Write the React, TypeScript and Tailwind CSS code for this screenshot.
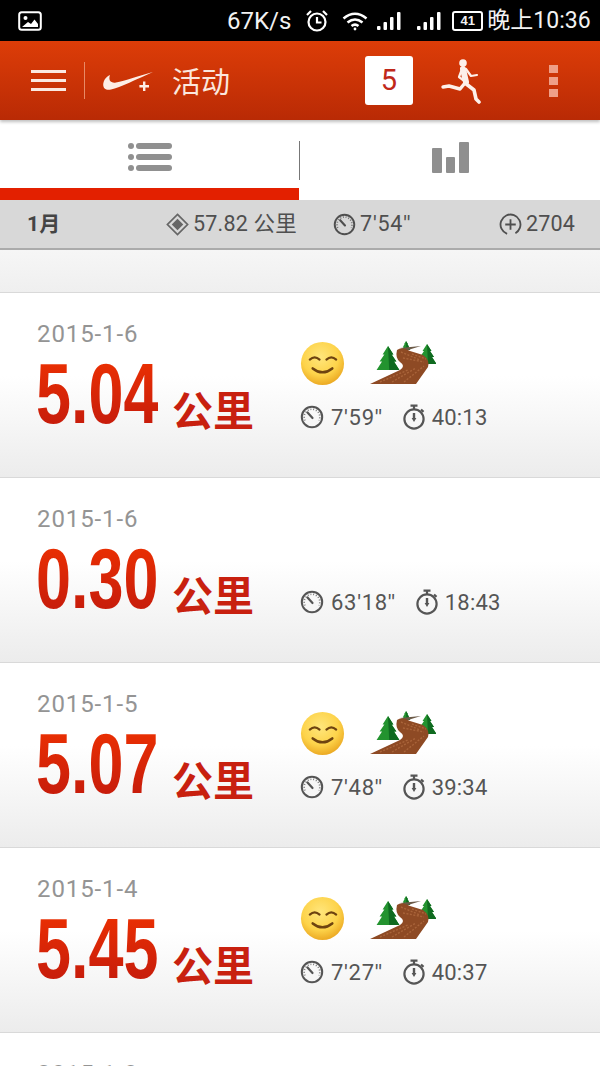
const ROWS = [
  { date: "2015-1-6", km: "5.04", pace: "7'59''", time: "40:13", badges: true },
  { date: "2015-1-6", km: "0.30", pace: "63'18''", time: "18:43", badges: false },
  { date: "2015-1-5", km: "5.07", pace: "7'48''", time: "39:34", badges: true },
  { date: "2015-1-4", km: "5.45", pace: "7'27''", time: "40:37", badges: true },
  { date: "2015-1-3", km: "5.12", pace: "7'50''", time: "40:08", badges: true },
];

function Gauge({ className }: { className?: string }) {
  return (
    <svg viewBox="0 0 24 24" className={className} fill="none" stroke="currentColor">
      <circle cx="12" cy="12" r="10.2" strokeWidth="2" />
      <path d="M5 15.5A7.8 7.8 0 1 1 19 15.5" strokeWidth="1.6" strokeDasharray="1 1.8" opacity="0.75" />
      <path d="M7.5 7.5 L12.5 13" strokeWidth="2.2" strokeLinecap="round" />
    </svg>
  );
}

function Stopwatch({ className }: { className?: string }) {
  return (
    <svg viewBox="0 0 24 26" className={className} fill="none" stroke="currentColor">
      <circle cx="12" cy="15" r="9.6" strokeWidth="2.2" />
      <path d="M8.5 1.6h7M12 2v3.5M19 5.5l2.5 2.4" strokeWidth="2.2" />
      <path d="M12 9v6" strokeWidth="2.4" />
      <path d="M9.6 14h4.8L12 18z" fill="currentColor" stroke="none" />
    </svg>
  );
}

function Smile() {
  return (
    <svg viewBox="0 0 46 46" className="h-[45px] w-[45px]">
      <defs>
        <radialGradient id="face" cx="45%" cy="35%" r="70%">
          <stop offset="0%" stopColor="#ffe67c" />
          <stop offset="60%" stopColor="#fdd34a" />
          <stop offset="100%" stopColor="#e8a11b" />
        </radialGradient>
      </defs>
      <circle cx="23" cy="23" r="22" fill="url(#face)" />
      <path d="M10 19q5-4.5 10 0M27 19q5-4.5 10 0" fill="none" stroke="#6e4310" strokeWidth="2.2" strokeLinecap="round" />
      <path d="M13 28q10 8 20 0" fill="none" stroke="#6e4310" strokeWidth="2.6" strokeLinecap="round" />
    </svg>
  );
}

function Tree({ x, y, s }: { x: number; y: number; s: number }) {
  return (
    <g transform={`translate(${x} ${y}) scale(${s})`}>
      <path d="M0 0 L4.5 7 L3 7 L7 13 L5 13 L9.5 20 L-9.5 20 L-5 13 L-7 13 L-3 7 L-4.5 7Z" fill="#23932f" />
      <path d="M0 0 L4.5 7 L3 7 L7 13 L5 13 L9.5 20 L1 20Z" fill="#0f6a20" />
    </g>
  );
}

function Trail() {
  return (
    <svg viewBox="0 0 66 44" className="h-[44px] w-[66px]">
      <Tree x={36} y={0} s={0.45} />
      <Tree x={18} y={5} s={1.2} />
      <Tree x={57} y={3} s={1.0} />
      <path d="M30 7 L51 5 L38 9z" fill="#6b5a48" />
      <path
        d="M0 43 L30 29 Q36 25 30 21 Q25 17 27 9 Q32 5 40 10 L53 14 Q60 19 58 26 L46 43Z"
        fill="#8e4a24"
      />
      <path
        d="M10 41 L38 29 M31 11 L50 19 M22 41 L46 27 M33 17 L54 21 M34 41 L54 25 M42 13 L56 18"
        stroke="#a9643a"
        strokeWidth="1.4"
        strokeDasharray="2 1.5"
      />
    </svg>
  );
}

function Row({ row }: { row: (typeof ROWS)[number] }) {
  return (
    <div className="flex h-[185px] shrink-0 border-b border-[#d9d9d9] bg-gradient-to-b from-white from-45% to-[#ececec]">
      <div className="w-[300px] shrink-0 pl-[37px] pt-[27px]">
        <div className="font-['Roboto'] text-[24px] leading-[28px] tracking-[0.9px] text-[#949494]">{row.date}</div>
        <div className="mt-[2px] flex h-[88px] items-center">
          <div className="-ml-[1px] w-[124px] shrink-0">
            <span className="inline-block origin-left scale-x-[0.74] whitespace-nowrap bg-gradient-to-b from-[#f03200] to-[#c0180c] bg-clip-text font-['Liberation_Sans'] text-[85px] font-bold leading-[88px] text-transparent">
              {row.km}
            </span>
          </div>
          <span className="ml-[12px] mt-[28px] whitespace-nowrap font-['Noto_Sans_CJK_SC'] text-[41px] font-bold leading-[48px] text-[#c8200f]">
            公里
          </span>
        </div>
      </div>
      <div className="flex flex-col pt-[47px] font-['Roboto'] text-[22px] text-[#555]">
        <div className="flex h-[46px] items-center">
          {row.badges && (
            <>
              <Smile />
              <div className="ml-[25px]">
                <Trail />
              </div>
            </>
          )}
        </div>
        <div className="mt-[18px] flex h-[26px] items-center">
          <Gauge className="h-[24px] w-[24px]" />
          <span className="ml-[7px] tracking-[0.7px]">{row.pace}</span>
          <Stopwatch className="ml-[19px] h-[26px] w-[24px]" />
          <span className="ml-[6px] tracking-[0.2px]">{row.time}</span>
        </div>
      </div>
    </div>
  );
}

function SignalBars() {
  return (
    <svg viewBox="0 0 24 18" className="h-[18px] w-[24px]" fill="white">
      <rect x="0" y="14" width="3.5" height="4" rx="1" />
      <rect x="6.5" y="10" width="3.5" height="8" rx="1" />
      <rect x="13" y="5" width="3.5" height="13" rx="1" />
      <rect x="20" y="0" width="3.5" height="18" rx="1" />
    </svg>
  );
}

export default function App() {
  return (
    <div className="flex h-[1066px] w-[600px] flex-col overflow-hidden bg-white">
      {/* status bar */}
      <div className="flex h-[41px] shrink-0 items-center bg-black pl-[18px] font-['Roboto'] text-[24px] text-[#f2f2f2]">
        <svg viewBox="0 0 24 20" className="h-[20px] w-[24px]" fill="none">
          <rect x="1.2" y="1.2" width="21.6" height="17.6" rx="2.5" stroke="white" strokeWidth="2" />
          <circle cx="7.5" cy="7" r="2" fill="white" />
          <path d="M4 16 L10 11 L13 13 L16.5 8.5 L20 13 V16Z" fill="white" />
        </svg>
        <span className="ml-[185px] pt-[1px]">67K/s</span>
        <svg viewBox="0 0 24 24" className="ml-[14px] h-[24px] w-[24px]" fill="none" stroke="white" strokeWidth="2.2">
          <circle cx="12" cy="13" r="8.5" />
          <path d="M12 8v5.5h4.5M2 6l4-4M22 6l-4-4" />
        </svg>
        <svg viewBox="0 0 26 20" className="ml-[13px] h-[20px] w-[26px]" fill="none" stroke="white" strokeWidth="2.6">
          <path d="M1.5 7.5q11.5-9.5 23 0M5.5 11.5q7.5-6 15 0M9.5 15q3.5-2.6 7 0" />
          <circle cx="13" cy="18" r="1.4" fill="white" stroke="none" />
        </svg>
        <div className="ml-[9px]">
          <SignalBars />
        </div>
        <div className="ml-[16px]">
          <SignalBars />
        </div>
        <div className="ml-[11px] flex h-[20px] w-[31px] items-center justify-center rounded-[3px] border-2 border-white font-['Liberation_Sans'] text-[13px] font-bold leading-none">
          41
        </div>
        <span className="ml-[4px] whitespace-nowrap font-['Roboto','Noto_Sans_CJK_SC'] text-[23px] leading-none">
          晚上10:36
        </span>
      </div>

      {/* header */}
      <div className="flex h-[79px] shrink-0 items-center bg-gradient-to-b from-[#dd3d08] to-[#b92a05] pl-[31px] shadow-[0_2px_3px_rgba(0,0,0,0.25)]">
        <div className="flex w-[35px] flex-col gap-[6px]">
          <div className="h-[3px] bg-[#fbe9e1]" />
          <div className="h-[3px] bg-[#fbe9e1]" />
          <div className="h-[3px] bg-[#fbe9e1]" />
        </div>
        <div className="ml-[18px] h-[37px] w-px bg-[#e88a66]" />
        <svg viewBox="0 0 50 22" className="ml-[18px] h-[22px] w-[50px]" fill="#fdeee6">
          <path d="M2 9 C-2 16 1 21 8 19.5 C17 17.5 34 9 50 2 C36 5.5 22 11 13 12.5 C8 13.4 5 11 7 5 C5 6 3 7.5 2 9Z" />
          <path d="M40 11.5h2.4v3.6h3.6v2.4h-3.6v3.6H40v-3.6h-3.6v-2.4H40z" />
        </svg>
        <span className="ml-[19px] font-['Noto_Sans_CJK_SC'] text-[29px] leading-none text-[#fbe7dd]">活动</span>
        <div className="ml-[135px] flex h-[49px] w-[48px] items-center justify-center rounded-[3px] bg-white font-['Roboto'] text-[29px] text-[#c0281a]">
          5
        </div>
        <svg viewBox="0 0 40 46" className="ml-[28px] h-[46px] w-[40px]" fill="none" stroke="#fdf0ea" strokeLinejoin="round" strokeLinecap="round">
          <circle cx="22" cy="5" r="3.8" fill="#fdf0ea" stroke="none" />
          <path d="M22 11 L25 24" strokeWidth="6" />
          <path d="M24 25 L33 32 L35 41 L38 44" strokeWidth="3.6" />
          <path d="M24 25 L19 31 L8 28 L2 29" strokeWidth="3.4" />
          <path d="M21 11 L18 19 L22 22" strokeWidth="2.2" />
          <path d="M25 11 L30 18 L36 17" strokeWidth="2.2" />
        </svg>
        <div className="ml-[68px] flex flex-col gap-[4px]">
          <div className="h-[8px] w-[9px] bg-[#ef9f88]" />
          <div className="h-[8px] w-[9px] bg-[#ef9f88]" />
          <div className="h-[8px] w-[9px] bg-[#ef9f88]" />
        </div>
      </div>

      {/* tabs */}
      <div className="mt-[2px] flex h-[78px] shrink-0">
        <div className="relative flex h-full w-[299px] justify-center border-b-[12px] border-[#e32000] pt-[21px]">
          <div className="flex h-[28px] w-[44px] flex-col justify-between">
            {[0, 1, 2].map((i) => (
              <div key={i} className="flex items-center gap-[2px]">
                <div className="h-[6px] w-[6px] rounded-full bg-[#909090]" />
                <div className="h-[6px] flex-1 rounded-full bg-[#909090]" />
              </div>
            ))}
          </div>
        </div>
        <div className="mt-[19px] h-[39px] w-px bg-[#777]" />
        <div className="flex flex-1 items-end justify-center gap-[4px] pb-[27px]">
          <div className="h-[25px] w-[10px] rounded-[1px] bg-[#8f8f8f]" />
          <div className="h-[16px] w-[9px] rounded-[1px] bg-[#8f8f8f]" />
          <div className="h-[31px] w-[10px] rounded-[1px] bg-[#8f8f8f]" />
        </div>
      </div>

      {/* month summary */}
      <div className="grid h-[50px] shrink-0 grid-cols-[139px_167px_166px_1fr] items-center border-b-2 border-[#ababab] bg-[#d8d8d8] pl-[27px] font-['Roboto'] text-[21.5px] tracking-[0.2px] text-[#4f4f4f]">
        <span className="font-['Roboto','Noto_Sans_CJK_SC'] text-[21px] font-bold leading-none text-[#444]">1月</span>
        <div className="flex items-center gap-[4px]">
          <svg viewBox="0 0 24 24" className="h-[23px] w-[23px]">
            <path d="M12 1.5 L22.5 12 L12 22.5 L1.5 12Z" fill="none" stroke="#666" strokeWidth="1.8" />
            <path d="M12 6 L18 12 L12 18 L6 12Z" fill="#666" />
          </svg>
          <span className="whitespace-nowrap font-['Roboto','Noto_Sans_CJK_SC']">57.82 公里</span>
        </div>
        <div className="flex items-center gap-[4px]">
          <Gauge className="h-[23px] w-[23px]" />
          <span className="tracking-[0.8px]">7'54''</span>
        </div>
        <div className="flex items-center gap-[4px]">
          <svg viewBox="0 0 24 24" className="h-[23px] w-[23px]" fill="none" stroke="currentColor" strokeWidth="1.9">
            <circle cx="12" cy="12" r="10.4" strokeDasharray="56 9" transform="rotate(110 12 12)" />
            <path d="M12 6.5v11M6.5 12h11" />
          </svg>
          <span>2704</span>
        </div>
      </div>

      {/* spacer above the list */}
      <div className="h-[43px] shrink-0 border-b border-[#d9d9d9] bg-gradient-to-b from-[#f6f6f6] to-[#efefef]" />

      {ROWS.map((row, i) => (
        <Row key={i} row={row} />
      ))}
    </div>
  );
}
